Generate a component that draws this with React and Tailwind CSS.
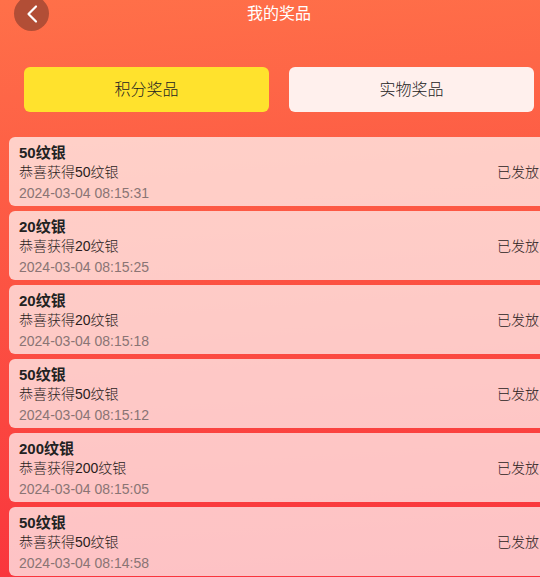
const prizes = [
  { title: '50纹银', desc: '恭喜获得50纹银', time: '2024-03-04 08:15:31' },
  { title: '20纹银', desc: '恭喜获得20纹银', time: '2024-03-04 08:15:25' },
  { title: '20纹银', desc: '恭喜获得20纹银', time: '2024-03-04 08:15:18' },
  { title: '50纹银', desc: '恭喜获得50纹银', time: '2024-03-04 08:15:12' },
  { title: '200纹银', desc: '恭喜获得200纹银', time: '2024-03-04 08:15:05' },
  { title: '50纹银', desc: '恭喜获得50纹银', time: '2024-03-04 08:14:58' },
]

export default function App() {
  return (
    <div className="h-[577px] w-[540px] overflow-hidden bg-[linear-gradient(176deg,#ff7049_0%,#f9323c_100%)] font-['Liberation_Sans','Noto_Sans_CJK_SC',sans-serif] text-[#222]">
      {/* Header */}
      <div className="flex h-[28px] items-start">
        <button className="ml-[14px] mt-[-4px] flex h-[35px] w-[35px] shrink-0 items-center justify-center rounded-full bg-[#b24e36]">
          <svg width="14" height="20" viewBox="0 0 14 20" fill="none" stroke="white" strokeWidth="2.2" strokeLinecap="round" strokeLinejoin="round">
            <path d="M11 2.5 3.5 10l7.5 7.5" />
          </svg>
        </button>
        <h1 className="ml-[198px] text-[16px] leading-[28px] text-white">我的奖品</h1>
      </div>

      {/* Tabs */}
      <div className="mt-[39px] flex gap-[20px] pl-[24px]">
        <button className="h-[45px] w-[245px] shrink-0 rounded-[6px] bg-[#ffe22d] text-[16px] font-light">积分奖品</button>
        <button className="h-[45px] w-[245px] shrink-0 rounded-[6px] bg-[#fff0ed] text-[16px] font-light">实物奖品</button>
      </div>

      {/* List */}
      <div className="ml-[9px] mt-[25px] flex w-[540px] flex-col gap-[5px]">
        {prizes.map((item, i) => (
          <div key={i} className="flex h-[69px] justify-between rounded-l-[6px] bg-white/70 pl-[10px] pr-[10px] pt-[5px]">
            <div className="text-[14px]">
              <div className="text-[15px] leading-[21px] font-bold text-[#222]">{item.title}</div>
              <div className="leading-[19px] font-light text-[#2a1c1c]">{item.desc}</div>
              <div className="leading-[23px] text-[#8a7474]">{item.time}</div>
            </div>
            <span className="mt-[21px] text-[14px] leading-[19px] font-light text-[#2a1c1c]">已发放</span>
          </div>
        ))}
      </div>
    </div>
  )
}
